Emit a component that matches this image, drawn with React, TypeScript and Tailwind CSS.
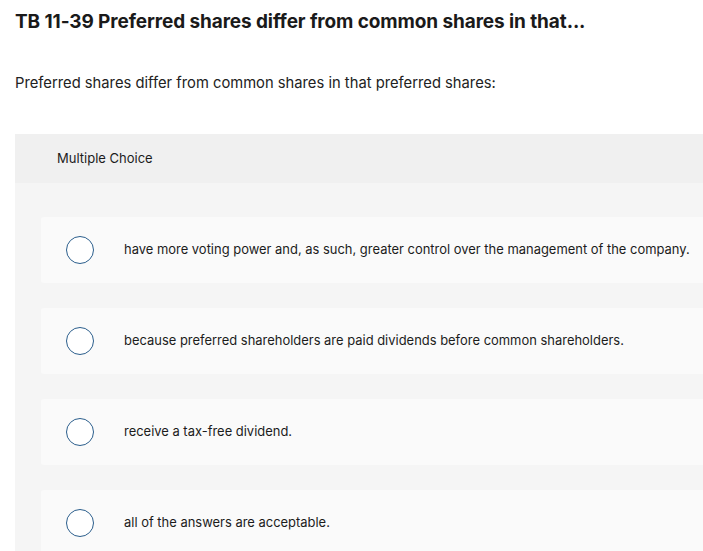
const OPTIONS = [
  "have more voting power and, as such, greater control over the management of the company.",
  "because preferred shareholders are paid dividends before common shareholders.",
  "receive a tax-free dividend.",
  "all of the answers are acceptable.",
];

export default function App() {
  return (
    <div
      className="w-[703px] h-[551px] overflow-hidden bg-white text-[#1c1c1c]"
      style={{ fontFamily: "Inter, 'Noto Sans', sans-serif" }}
    >
      <h1 className="pl-[15px] pt-[11px] text-[19px] font-bold leading-[22px] tracking-[-0.1px] text-[#1a1a1a]">
        TB 11-39 Preferred shares differ from common shares in that...
      </h1>
      <p className="pl-[15px] pt-[40px] text-[14.75px] leading-[20px] text-[#222]">
        Preferred shares differ from common shares in that preferred shares:
      </p>

      <div className="ml-[15px] mt-[41px] w-[720px] rounded-tl-[3px] bg-[#f5f5f5]">
        <div className="flex h-[49px] items-center bg-[#f0f0f0] pl-[42px] pt-[1px] text-[13px]">
          Multiple Choice
        </div>
        <div className="flex flex-col gap-[25px] pl-[26px] pt-[34px]">
          {OPTIONS.map((o) => (
            <div
              key={o}
              className="flex h-[66px] items-center rounded-[3px] bg-[#fafafa]"
            >
              <div className="ml-[25px] h-[28px] w-[28px] rounded-full border-[1.5px] border-[#2b5e8c] bg-white" />
              <span className="ml-[30px] text-[12.95px] text-[#1c1c1c]">{o}</span>
            </div>
          ))}
        </div>
      </div>
    </div>
  );
}
